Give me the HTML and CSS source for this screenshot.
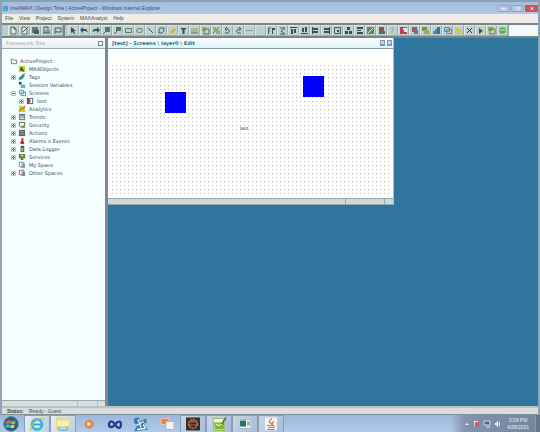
FILE: index.html
```html
<!DOCTYPE html>
<html lang="en">
<head>
<meta charset="utf-8">
<title>IntelliMAX | Design Time | ActiveProject</title>
<link rel="stylesheet" href="styles.css">
</head>
<body>
<div class="browser">
  <header class="titlebar">
    <svg class="ie" viewBox="0 0 8 8"><circle cx="4" cy="4" r="2.4" fill="none" stroke="#3b9bd0" stroke-width="1.4"/><path d="M2 4h4M1 7Q0 5 7 1" fill="none" stroke="#4b9ab0"/></svg>
    <h1>IntelliMAX | Design Time | ActiveProject - Windows Internet Explorer</h1>
    <div class="winctl">
      <button aria-label="Minimize"><svg viewBox="0 0 13 7"><path d="M4 4h5" stroke="#eef3fa" stroke-width="2"/></svg></button>
      <button aria-label="Restore"><svg viewBox="0 0 13 7"><path d="M5 2h4v3h-4z" fill="none" stroke="#eef3fa"/></svg></button>
      <button class="close" aria-label="Close"><svg viewBox="0 0 13 7"><path d="M5 2l4 3M9 2l-4 3" stroke="#fff" stroke-width="1.3"/></svg></button>
    </div>
  </header>
  <nav class="menu">
    <button>File</button><button>View</button><button>Project</button><button>System</button><button>MAXAnalyst</button><button>Help</button>
  </nav>
  <div class="toolbars">
    <div class="tools" id="file-tools"></div>
    <div class="tools" id="edit-tools"></div>
    <div class="tools-rest"></div>
  </div>
  <main class="work">
    <aside class="tree">
      <div class="tree-head"><h2>Framework Tree</h2><button class="pin" aria-label="Dock"></button></div>
      <ul id="tree"></ul>
      <div class="tree-foot"><span></span><span></span></div>
    </aside>
    <section class="desk">
      <article class="window">
        <div class="win-head"><h2>[test] - Screens \ layer0 \ Edit</h2><button aria-label="Maximize screen"></button><button aria-label="Close screen"></button></div>
        <div class="canvas">
          <div class="dots"></div>
          <div class="box box-a"></div>
          <div class="box box-b"></div>
          <span class="label">text</span>
        </div>
        <div class="win-foot"><span></span><span></span></div>
      </article>
    </section>
  </main>
  <footer class="status"><b>Status:</b><span>Ready - Guest</span></footer>
</div>
<div class="taskbar">
  <button class="start" aria-label="Start"><svg viewBox="0 0 26 17"><circle cx="12" cy="9" r="8" fill="#28607f" stroke="#678ba8"/><path d="M7 6q3-2 5 0l-1 3q-2-1-5 0z" fill="#e96b35"/><path d="M12 6q3 1 5-1l-1 4q-2 1-4 0z" fill="#91c84a"/><path d="M6 10q3-1 5 0l-1 3q-2-1-4 0z" fill="#55b5e5"/><path d="M12 10q2 1 4 0l-1 3q-2 1-4 0z" fill="#f3d449"/></svg></button>
  <button class="task lit" aria-label="Internet Explorer"><svg viewBox="0 0 18 15"><circle cx="9" cy="8" r="5" fill="#d8f4fb" stroke="#45b2de" stroke-width="2.8"/><path d="M5 8h8" stroke="#35a7d8" stroke-width="2"/><path d="M4 14Q0 14 6 6Q16-2 16 4" fill="none" stroke="#d9bd50" stroke-width="1.2"/></svg></button>
  <button class="task lit" aria-label="Explorer"><svg viewBox="0 0 18 15"><path d="M2 1h5l1 1h8v12H2z" fill="#ead67c"/><path d="M3 4h12v6H3z" fill="#f9efae"/><path d="M3 10h12v4H3z" fill="#b4d5d5"/><path d="M5 10v4h8v-4" fill="none" stroke="#6aaed0"/></svg></button>
  <button class="task flat" aria-label="Media Player"><svg viewBox="0 0 18 15"><path d="M3 3l9-1 3 10-9 1z" fill="#a9cce3"/><circle cx="9" cy="7.500" r="4.500" fill="#e9843c"/><path d="M7.500 5v5l4-2.500z" fill="#fff"/></svg></button>
  <button class="task flat" aria-label="Visual Studio"><svg viewBox="0 0 18 15"><path d="M9 8C6 3 3 5 3 8s3 4 6 0s6-4 6 0s-3 5-6 0z" fill="none" stroke="#30358b" stroke-width="2.2"/></svg></button>
  <button class="task flat" aria-label="Administrator"><svg viewBox="0 0 18 15"><path d="M2 2l5-1 1 4 6-3 1 4-3 1 4 6-6 1-8 1 3-6-3-3z" fill="#3a7ca8"/><path d="M4 9l8-4M6 3l3 8M5 13l8-1M11 8l3 4" stroke="#e5f4fc" stroke-width="1.300"/></svg></button>
  <button class="task flat" aria-label="Windows"><svg viewBox="0 0 18 15"><path d="M3 2h8v6H3z" fill="#df8752" stroke="#f7c09d"/><path d="M8 5h8v8H8z" fill="#f1f4f5" stroke="#adb8c0"/></svg></button>
  <button class="task" aria-label="Server"><svg viewBox="0 0 18 15"><path d="M2 1h14v13H2z" fill="#382d35"/><circle cx="9" cy="7.500" r="4.600" fill="#945338" stroke="#d38d55" stroke-dasharray="2 1"/><path d="M6 7h6M7 10h4" stroke="#36252a" stroke-width="1.5"/></svg></button>
  <button class="task" aria-label="Notepad++"><svg viewBox="0 0 18 15"><path d="M3 2h10l2 12H4z" fill="#eef6df" stroke="#98b56d"/><path d="M4 6h10v7H5z" fill="#7ebd25"/><path d="M16 1l-5 8" stroke="#536d35" stroke-width="1.5"/><path d="M6 8l3 1 3-1" stroke="#fff" fill="none"/></svg></button>
  <button class="task" aria-label="Console"><svg viewBox="0 0 18 15"><path d="M3 3h12v9H3z" fill="#edf4f3" stroke="#a9bdc5"/><path d="M4 4h6v6H4z" fill="#2d706b"/><path d="M11 5h3v4h-3z" fill="#8bb4ad"/></svg></button>
  <button class="task" aria-label="Java"><svg viewBox="0 0 18 15"><path d="M3 1h12v13H3z" fill="#f3f4f4"/><path d="M10 2q-5 3-1 5q2 1 0 2M12 5q-3 2-1 3" fill="none" stroke="#e07b32" stroke-width="1.200"/><path d="M5 9h7v2H6M5 13h8" fill="none" stroke="#6e93aa"/></svg></button>
  <div class="tray">
    <svg viewBox="0 0 36 9"><path d="M1 6l2-2 2 2z" fill="#eef2f6"/><path d="M10 2h4v5h-4z" fill="#e8edf2"/><circle cx="13" cy="5" r="2.300" fill="#d45656"/><path d="M20 2h6v4h-6zM22 8h4" fill="#59626e" stroke="#d5dfe8"/><path d="M31 4h1l2-2v6l-2-2h-1z" fill="#fff"/><path d="M35 3q1 2 0 4" stroke="#fff" fill="none"/></svg>
    <time><span>3:29 PM</span><span>4/26/2021</span></time>
  </div>
  <button class="peek" aria-label="Show desktop"></button>
</div>
<script src="app.js"></script>
</body>
</html>
```

FILE: styles.css
```css
* { box-sizing: border-box; }
html, body { height: 100%; }
body {
  margin: 0;
  display: flex;
  flex-direction: column;
  font: 5px/8px "DejaVu Sans", sans-serif;
  color: #3f4850;
  overflow: hidden;
}
h1, h2, ul { margin: 0; padding: 0; font: inherit; list-style: none; }
button { margin: 0; padding: 0; border: 0; background: none; font: inherit; color: inherit; }
svg { display: block; }

.browser {
  flex: 1;
  min-height: 0;
  display: flex;
  flex-direction: column;
  border: solid #8fa3b2;
  border-width: 0 2px;
  background: #d5dcdd;
}
.titlebar, .menu, .status, .tray time { font: 5px/7px "Liberation Sans", sans-serif; }
.titlebar {
  height: 14px;
  display: flex;
  align-items: center;
  gap: 1px;
  border-top: 2px solid #86a3af;
  background: linear-gradient(#a5bddc, #b0c7ea);
  color: #3c4a62;
}
.titlebar h1 { flex: 1; }
.ie { width: 7px; height: 7px; }
.winctl { display: flex; gap: 1px; }
.winctl button { width: 13px; height: 7px; border: 1px solid #90a6c3; border-radius: 1px; background: #b2c5df; }
.winctl svg { width: 100%; height: 100%; }
.winctl .close { border-color: #a86466; background: #c75552; }
.menu { height: 9px; display: flex; align-items: center; gap: 6px; padding-left: 3px; background: linear-gradient(90deg, #eeefdf, #f1ece9 40%); }
.toolbars { height: 15px; display: flex; border: solid #788586; border-width: 2px 0; background: #bacccc; }
.tools { display: flex; padding-left: 6px; border-right: 2px solid #778586; }
.tools + .tools { padding-left: 3px; border-right: 1px solid #97a6a6; }
.tools button { width: 11px; height: 11px; border: solid; border-width: 1px; border-color: #dae6e3 #9dafaf #9dafaf #dae6e3; background: #c0d2d0; }
.tools svg { width: 9px; height: 9px; opacity: 0.85; }
.tools-rest { flex: 1; background: #f2f7f9; }

.work { flex: 1; min-height: 0; display: flex; }
.tree { width: 106px; display: flex; flex-direction: column; border-right: 3px solid #7f898d; background: #f5ffff; }
.tree-head { height: 11px; display: flex; align-items: center; padding: 0 2px 0 4px; border-bottom: 1px solid #a0acae; background: linear-gradient(#fff, #e2eef0); color: #9ba1a7; }
.tree-head h2 { flex: 1; }
.pin { width: 5px; height: 5px; border: 1px solid #6f858d; }
.tree ul { flex: 1; padding: 8px 0 0 8px; }
.tree li { height: 8px; display: flex; align-items: center; padding-left: 1px; }
.tree li svg { width: 8px; height: 8px; margin-right: 3px; }
.tree .root { padding-left: 0; }
.tree .root svg { margin-right: 2px; }
.tree .deep { padding-left: 9px; }
.tree li .twist { width: 5px; height: 5px; margin-right: 2px; }
.tree-foot { height: 6px; display: flex; justify-content: flex-end; border-top: 1px solid #9ca8aa; background: #d7dfe1; }
.tree-foot span { width: 20px; border-left: 1px solid #b1bdbf; }
.tree-foot span + span { width: 8px; }

.desk { flex: 1; background: #2f759c; }
.window { width: 66.5%; display: flex; flex-direction: column; border-right: 1px solid #a6bdc8; background: #fff; }
.win-head { height: 11px; display: flex; align-items: center; gap: 2px; padding: 0 1px 0 4px; border-bottom: 1px solid #8599a4; background: linear-gradient(#fff, #dcf4fb); color: #286c84; }
.win-head h2 { flex: 1; font-weight: bold; }
.win-head button { width: 5px; height: 6px; border: 1px solid #8295bd; border-bottom-width: 2px; background: #c6d4e9; }
.canvas { position: relative; height: 149px; padding: 16px 1px 0 4px; }
.dots { height: 131px; background: conic-gradient(at 1px 1px, #fff 75%, #b4b4ba 0) 0 0 / 4px 4px; }
.box { position: absolute; width: 21px; height: 21px; background: #0000f8; }
.box-a { left: 57px; top: 43px; }
.box-b { left: 195px; top: 27px; }
.label { position: absolute; left: 132px; top: 75px; color: #3f3b9c; font-family: "Liberation Sans", sans-serif; }
.win-foot { height: 7px; display: flex; justify-content: flex-end; border: solid #97a7ae; border-width: 1px 0; background: #ccd9dd; }
.win-foot span { width: 39px; border-left: 1px solid #9caab0; }
.win-foot span + span { width: 9px; }

.status { height: 9px; display: flex; align-items: center; gap: 5px; padding-left: 5px; border-top: 2px solid #b7c5c6; border-bottom: 1px solid #7f8f98; background: #dadedb; }

.taskbar { height: 17px; display: flex; align-items: stretch; background: linear-gradient(#9cb7d9, #b0cbe8); }
.taskbar > button svg { width: 100%; height: 100%; }
.start { width: 24px; }
.task { width: 26px; padding: 0 3px; border: 1px solid #899db8; border-bottom: 0; background: linear-gradient(120deg, #c9d6e6, #a8bcd5); }
.task.lit { background: linear-gradient(120deg, #e5eef4, #bccfdf); }
.task.flat { border-color: transparent; background: none; }
.tray { margin-left: auto; width: 84px; display: flex; align-items: center; justify-content: flex-end; gap: 4px; padding-right: 3px; background: linear-gradient(90deg, transparent, #8193ad 14px, #74869e); color: #edf2f8; }
.tray svg { width: 36px; height: 9px; }
.tray time { display: flex; flex-direction: column; width: 28px; text-align: center; }
.peek { width: 5px; border-left: 1px solid #8999aa; background: #65768a; }
```

FILE: app.js
```javascript
const page = '<path d="M2 1h3l2 2v5H2z" fill="#e3eeeb" stroke="#45595f"/>';
const line = (d, c = '#34474d') => `<path d="${d}" fill="none" stroke="${c}"/>`;
const fill = (d, c = '#26383e') => `<path d="${d}" fill="${c}"/>`;

const fileTools = [
  ['New', page + line('M5 1v2h2')],
  ['Edit', page + line('M3 6l5-5')],
  ['Save', fill('M1 1h6v6H1z', '#59666b') + fill('M3 4h5v4H3z', '#39484f')],
  ['Print', fill('M1 4h7v3H1z', '#839294') + line('M2 4V1h4v3M1 7h7')],
  ['Preview', line('M2 2h6v4H2z') + line('M1 8l3-3')],
];
const editTools = [
  ['Select', fill('M2 1l5 4H5l1 3-1 0-1-2-2 1z')],
  ['Undo', fill('M0 4l3-3v2h3l2 3-3-1H3v2z')],
  ['Redo', fill('M9 4L6 1v2H3L1 6l3-1h2v2z')],
  ['Zoom in', line('M1 8l3-3') + fill('M3 1h5v5H3z', '#3e6b58')],
  ['Zoom out', line('M1 8l3-3') + fill('M3 1h5v4H3z', '#42615b')],
  ['Rectangle', line('M1.5 2.500h6v4h-6z', '#536b50')],
  ['Ellipse', '<ellipse cx="4.500" cy="4.500" rx="3" ry="2" fill="none" stroke="#536b50"/>'],
  ['Line', line('M2 2l5 5')],
  ['Polygon', line('M3 2h4v3L5 7H2V4z')],
  ['Arc', fill('M1 7Q1 2 5 3l2-2v6z', '#dfcc62') + line('M3 7l4-4', '#747b54')],
  ['Text', fill('M2 2h5v1.500H5.500V8h-2V3.500H2z')],
  ['Image', fill('M1 2h7v5H1z', '#a9b58a') + line('M1 7h7', '#586b54')],
  ['Group', fill('M1 1h4v4H1z', '#9ab445') + line('M3 3h5v5H3z', '#46613a')],
  ['Ungroup', fill('M1 1h3v3H1zM4 4h4v4H4z', '#9cab48') + line('M1 7l6-6', '#44583c')],
  ['Rotate left', line('M2 7h3q3-2 0-4H2M4 1L2 3l2 2')],
  ['Rotate right', line('M7 7H4Q1 5 4 3h3M5 1l2 2-2 2')],
  ['Horizontal line', line('M1 4.500h7', '#81999b')],
  ['Vertical line', line('M4.500 1v7', '#abc2c3')],
  ['Flip horizontal', line('M1.500 8V2H4M1 5h2') + fill('M5 2h3v2H6v4H5z')],
  ['Flip vertical', line('M2 2h5L3 5l4 3H2')],
  ['Align top', fill('M1 1h7v1H1zM2 3h2v5H2zM5 3h2v4H5z')],
  ['Align bottom', fill('M1 7h7v1H1zM2 2h2v4H2zM5 1h2v5H5z')],
  ['Align left', fill('M1 1h1v7H1zM2 2h5v2H2zM2 5h5v2H2z')],
  ['Align right', fill('M7 1h1v7H7zM2 2h5v2H2zM2 5h5v2H2z')],
  ['Centre', line('M1.500 1.500h6v6h-6z') + fill('M4 4h2v2H4z')],
  ['Distribute', fill('M3 1h3v3H3zM1 5h3v3H1zM5 5h3v3H5z')],
  ['Space', fill('M2 1h6v2H2zM2 4h4v1H2zM2 6h6v2H2z')],
  ['Front', fill('M1 1h7v7H1z', '#4d7c46') + line('M2 7l5-5', '#e6eed7')],
  ['Back', fill('M2 1h5v7H2z', '#853e3b') + fill('M3 5h5v3H3z', '#4b5550')],
  ['Help', line('M3 3q2-3 3 0L4 5v2', '#6caab0')],
  ['Alarm', fill('M1 1h7v7H1z', '#973949') + fill('M4 2h4v4H4z', '#e5eef0') + fill('M1 4h4v3H1z', '#d41e35')],
  ['Event', fill('M2 1h5v5H2z', '#be3347') + fill('M4 4h4v4H4z', '#51658b')],
  ['Layers', fill('M1 1h5v4H1z', '#638948') + fill('M3 4h5v4H3z', '#94a447')],
  ['Chart', fill('M1 5h2v3H1zM3 3h2v5H3z', '#297fbf') + fill('M5 1h3v7H5z', '#1962aa')],
  ['Windows', line('M1.500 1.500h5v4h-5zM3.500 3.500h5v4h-5z', '#3581ad')],
  ['Folder', fill('M1 2h3l1 1h3v5H1z', '#ddc23d')],
  ['Delete', line('M2 2l5 5M7 2L2 7', '#15252b')],
  ['Run', fill('M3 2l4 3-4 3z')],
  ['Copy', fill('M1 1h5v4H1z', '#8daa38') + line('M3 3h5v5H3z', '#567137')],
  ['Publish', '<circle cx="4.500" cy="4.500" r="3.300" fill="#45a837"/><path d="M2 4h5" stroke="#d6f0c4"/>'],
];

function addTools(id, tools) {
  document.getElementById(id).innerHTML = tools
    .map(([name, art]) => `<button aria-label="${name}"><svg viewBox="0 0 9 9">${art}</svg></button>`)
    .join('');
}
addTools('file-tools', fileTools);
addTools('edit-tools', editTools);

const nodes = [
  ['ActiveProject', 'root', '', fill('M1 2h3l1 1h3v5H1z', '#f9ffff') + line('M1.500 2.500h2l1 1h3v4h-6z', '#687579')],
  ['MAXObjects', '', '', fill('M1 1h7v7H1z', '#bfcf32') + fill('M2 5l2-3 3 5H5z', '#384c25')],
  ['Tags', '', '+', fill('M1 5l4-3 3 1-3 4-4 1z', '#3d9a80') + line('M5 2l3-1', '#394f4b')],
  ['Session Variables', '', '', fill('M1 1h3v3H1z', '#23495e') + fill('M3 4h5v4H3z', '#6daad2')],
  ['Screens', '', '-', line('M1.500 1.500h5v4h-5zM3.500 3.500h5v4h-5z', '#4b8dbb')],
  ['test', 'deep', '+', fill('M1 1h7v7H1z', '#465e80') + fill('M4 2h3v5H4z', '#f5f5fa') + fill('M2 3h3v3H2z', '#d43244')],
  ['Analytics', '', '', fill('M1 1h7v7H1z', '#dfc53a') + line('M1 7l3-3 1 1 3-4', '#785125')],
  ['Trends', '', '+', fill('M1 1h7v7H1z', '#497da0') + fill('M2 3h5v4H2z', '#d8e6b4') + line('M2 6l2-2 2 1 1-2', '#69943c')],
  ['Security', '', '+', line('M1.500 1.500h6v4l-3 2-3-2z', '#49564a') + fill('M4 5h4v3H4z', '#879448')],
  ['Actions', '', '+', fill('M1 1h7v7H1z', '#59685f') + line('M2 3h5M2 5.500h5', '#a2b1a6')],
  ['Alarms n Events', '', '+', fill('M4 1h2v3l1 3H2l2-3z', '#b82f26') + fill('M3 7h4v1H3z', '#5d2925')],
  ['Data Logger', '', '+', fill('M3 1h4v7H3z', '#475232') + fill('M4 3h2v2H4zM4 6h2v1H4z', '#dce0a2')],
  ['Services', '', '+', fill('M1 1h7v5H1zM3 6h3v2H3z', '#667a35') + fill('M3 2h3v2H3z', '#c6db86')],
  ['My Space', '', '', line('M1.500 1.500h5v5h-5z', '#668d8a') + fill('M4 3h4v5H4z', '#7eab9c')],
  ['Other Spaces', '', '+', line('M1.500 1.500h5v5h-5z', '#a65566') + fill('M4 3h4v5H4z', '#739b86')],
];
const twistArt = {
  '': '',
  '+': line('M.5 .5h4v4h-4z', '#b3bfc3') + line('M1 2.500h3M2.500 1v3', '#66757c'),
  '-': line('M.5 .5h4v4h-4z', '#b3bfc3') + line('M1 2.500h3', '#66757c'),
};
document.getElementById('tree').innerHTML = nodes.map(([name, kind, twist, art]) => {
  const handle = kind === 'root' ? '' : `<svg class="twist" viewBox="0 0 5 5">${twistArt[twist]}</svg>`;
  return `<li class="${kind}">${handle}<svg viewBox="0 0 9 9">${art}</svg><span>${name}</span></li>`;
}).join('');
```
